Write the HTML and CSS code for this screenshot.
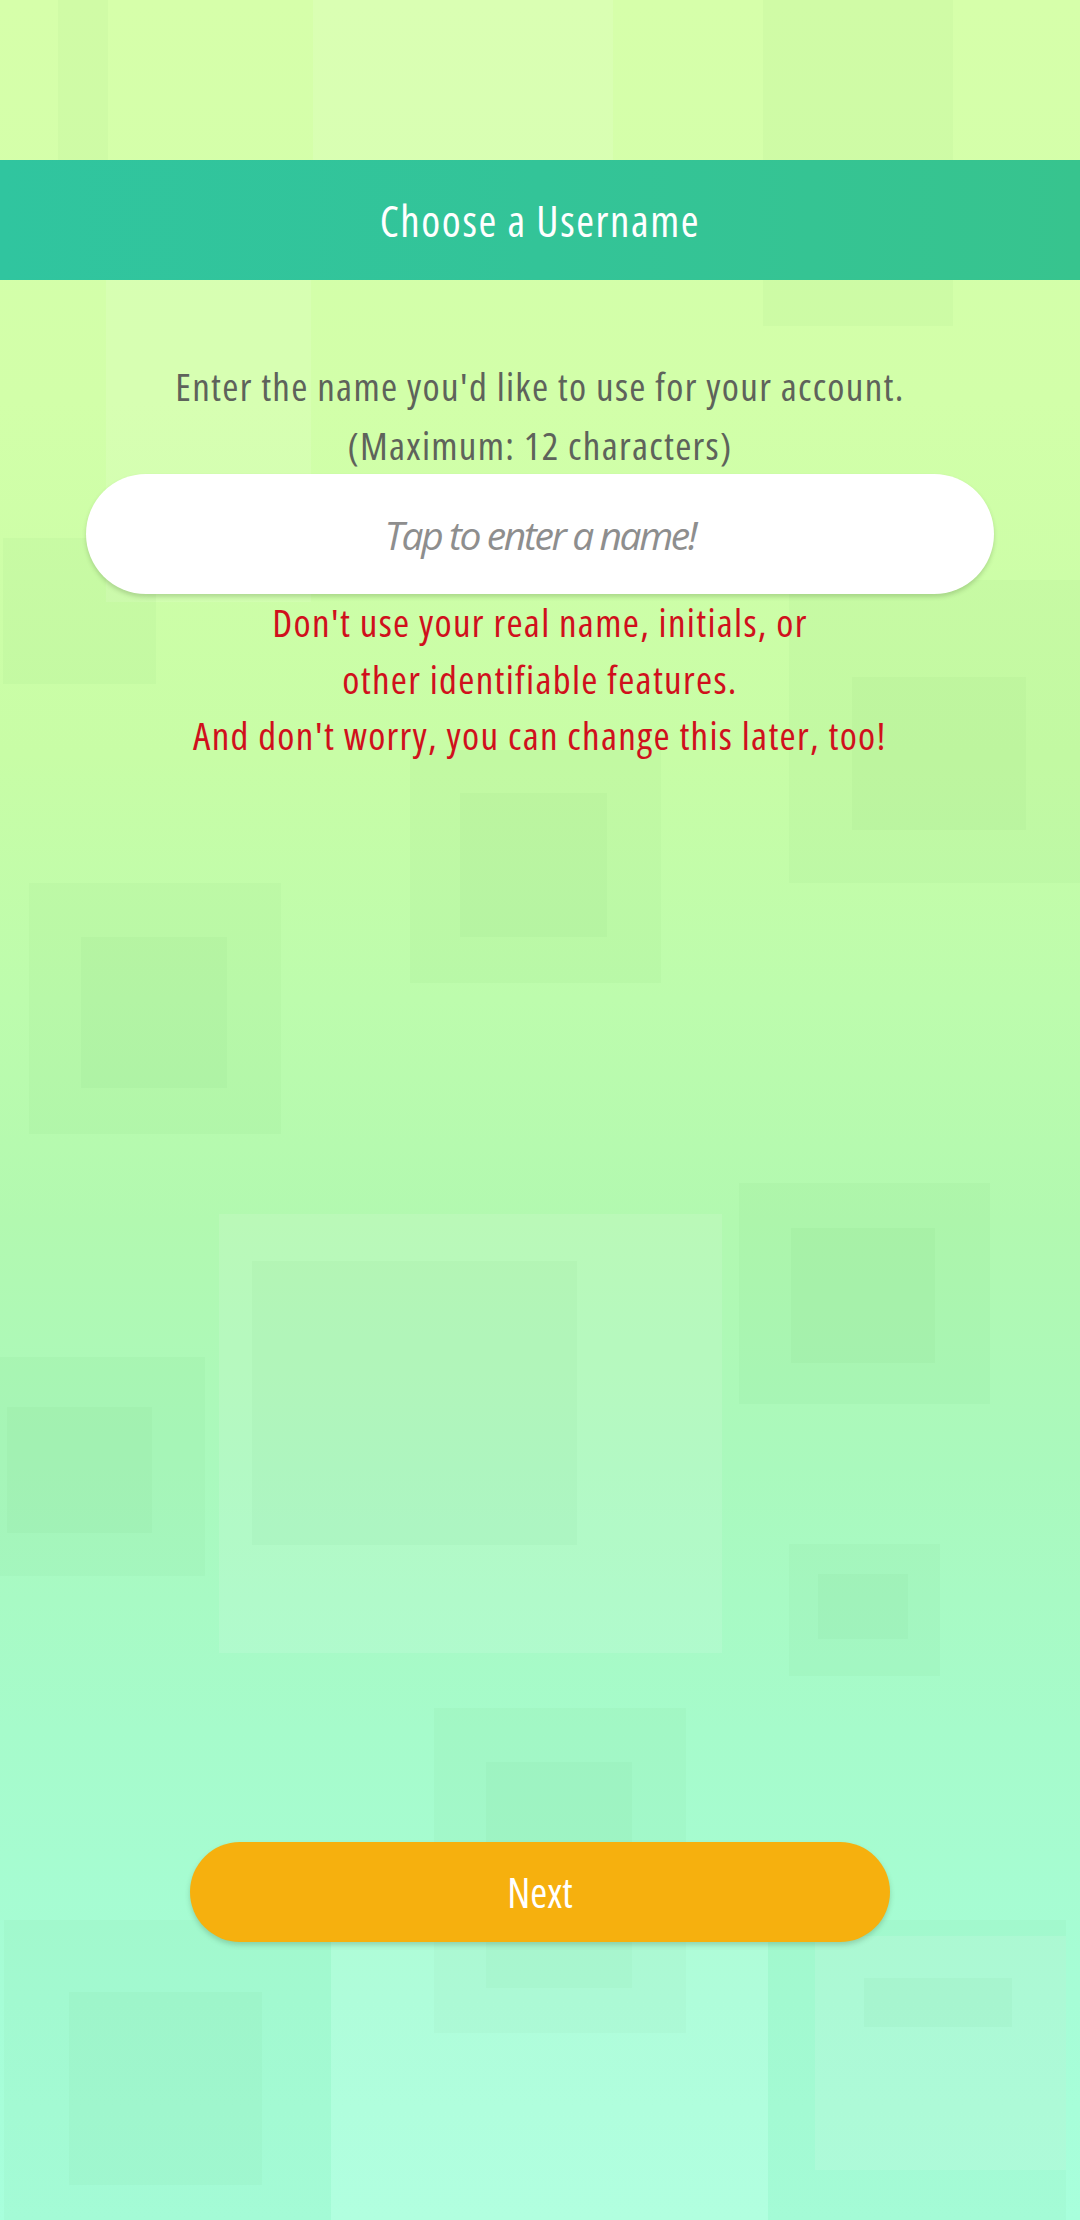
FILE: index.html
```
<!DOCTYPE html>
<html lang="en">
<head>
<meta charset="utf-8">
<title>Choose a Username</title>
<link rel="stylesheet" href="styles.css">
</head>
<body>
<div class="decor" aria-hidden="true">
  <div class="sq light r-top-a"></div>
  <div class="sq dark r-top-b"></div>
  <div class="sq dark r-top-c"></div>
  <div class="sq light r-left-a"></div>
  <div class="sq dark r-d"></div>
  <div class="sq dark r-e"></div>
  <div class="sq dark r-e2"></div>
  <div class="sq dark r-f"></div>
  <div class="sq dark r-f2"></div>
  <div class="sq dark r-g"></div>
  <div class="sq dark r-g2"></div>
  <div class="sq light r-h"></div>
  <div class="sq dark r-h2"></div>
  <div class="sq dark r-i"></div>
  <div class="sq dark r-i2"></div>
  <div class="sq dark r-j"></div>
  <div class="sq dark r-j2"></div>
  <div class="sq dark r-k"></div>
  <div class="sq dark r-k2"></div>
  <div class="sq dark r-l"></div>
  <div class="sq dark r-l2"></div>
  <div class="sq dark r-m"></div>
  <div class="sq dark r-m2"></div>
  <div class="sq light r-n"></div>
  <div class="sq dark r-o"></div>
  <div class="sq light r-o2"></div>
  <div class="sq dark r-o3"></div>
</div>
<div class="screen">
  <header class="titlebar">
    <h1 class="title">Choose a Username</h1>
  </header>
  <main class="content">
    <p class="intro">Enter the name you'd like to use for your account.<br>(Maximum: 12 characters)</p>
    <div class="name-field">
      <span class="placeholder">Tap to enter a name!</span>
    </div>
    <p class="warning">Don't use your real name, initials, or<br>other identifiable features.<br>And don't worry, you can change this later, too!</p>
  </main>
  <div class="actions">
    <button class="next-btn" type="button">Next</button>
  </div>
</div>
</body>
</html>
```
FILE: styles.css
```
* { box-sizing: border-box; }
html, body { margin: 0; padding: 0; }
body {
  width: 1080px;
  height: 2220px;
  overflow: hidden;
  position: relative;
  font-family: "Open Sans", "Noto Sans", sans-serif;
  font-stretch: 75%;
  background: linear-gradient(180deg,
    #d6ffaa 0%,
    #d2ffa9 18%,
    #c8fda6 34%,
    #bdfcad 45%,
    #b2f9b0 55%,
    #aaf9bd 66%,
    #a6fbcb 78%,
    #a6fdd6 90%,
    #a8ffdc 100%);
}
.decor { position: absolute; inset: 0; z-index: 0; }
.sq { position: absolute; }
.sq.dark { background: rgba(70, 150, 50, 0.035); }
.sq.light { background: rgba(255, 255, 255, 0.11); }

.r-top-a { left: 313px; top: 0; width: 300px; height: 170px; }
.r-top-b { left: 58px; top: 0; width: 50px; height: 170px; }
.r-top-c { left: 763px; top: 0; width: 190px; height: 326px; }
.r-left-a { left: 106px; top: 276px; width: 205px; height: 326px; }
.r-d { left: 3px; top: 538px; width: 153px; height: 146px; }
.r-e { left: 789px; top: 580px; width: 291px; height: 303px; }
.r-e2 { left: 852px; top: 677px; width: 174px; height: 153px; }
.r-f { left: 410px; top: 750px; width: 251px; height: 233px; }
.r-f2 { left: 460px; top: 793px; width: 147px; height: 144px; }
.r-g { left: 29px; top: 883px; width: 252px; height: 251px; }
.r-g2 { left: 81px; top: 937px; width: 146px; height: 151px; }
.r-h { left: 219px; top: 1214px; width: 503px; height: 439px; }
.r-h2 { left: 252px; top: 1261px; width: 325px; height: 284px; }
.r-i { left: 739px; top: 1183px; width: 251px; height: 221px; }
.r-i2 { left: 791px; top: 1228px; width: 144px; height: 135px; }
.r-j { left: 0; top: 1357px; width: 205px; height: 219px; }
.r-j2 { left: 7px; top: 1407px; width: 145px; height: 126px; }
.r-k { left: 789px; top: 1544px; width: 151px; height: 132px; }
.r-k2 { left: 818px; top: 1574px; width: 90px; height: 65px; }
.r-l { left: 434px; top: 1708px; width: 252px; height: 325px; }
.r-l2 { left: 486px; top: 1762px; width: 146px; height: 226px; }
.r-m { left: 4px; top: 1920px; width: 327px; height: 300px; }
.r-m2 { left: 69px; top: 1992px; width: 193px; height: 193px; }
.r-n { left: 331px; top: 1920px; width: 437px; height: 300px; }
.r-o { left: 768px; top: 1920px; width: 298px; height: 300px; }
.r-o2 { left: 815px; top: 1936px; width: 251px; height: 234px; }
.r-o3 { left: 864px; top: 1978px; width: 148px; height: 49px; }

.screen {
  position: relative;
  z-index: 1;
  height: 2220px;
  display: flex;
  flex-direction: column;
  padding-top: 160px;
  padding-bottom: 278px;
}
.titlebar {
  height: 120px;
  display: flex;
  align-items: center;
  justify-content: center;
  background: linear-gradient(90deg, #30c59f 0%, #33c498 50%, #37c48e 100%);
}
.title {
  margin: 0;
  color: #ffffff;
  font-size: 43px;
  font-weight: 400;
  line-height: 1;
  letter-spacing: 1.6px;
}
.content {
  display: flex;
  flex-direction: column;
  align-items: center;
  padding-top: 76px;
}
.intro {
  margin: 0;
  text-align: center;
  color: #5e635b;
  font-size: 39px;
  line-height: 59px;
  letter-spacing: 1.3px;
}
.name-field {
  align-self: stretch;
  margin: 0 86px;
  height: 120px;
  border-radius: 60px;
  background: #ffffff;
  box-shadow: 0 3px 4px rgba(60, 90, 40, 0.22);
  display: flex;
  align-items: center;
  justify-content: center;
}
.placeholder {
  color: #8e8e8e;
  font-style: italic;
  font-size: 39px;
  font-stretch: 100%;
  letter-spacing: -2.4px;
  line-height: 1;
}
.warning {
  margin: 0;
  text-align: center;
  color: #d0101c;
  font-size: 39px;
  line-height: 56.5px;
  letter-spacing: 1.3px;
}
.actions {
  margin-top: auto;
  display: flex;
  justify-content: center;
}
.next-btn {
  width: 700px;
  height: 100px;
  border: 0;
  border-radius: 50px;
  background: #f6b00e;
  color: #ffffff;
  font-family: "Open Sans", sans-serif;
  font-size: 41px;
  font-stretch: 75%;
  box-shadow: 0 3px 5px rgba(60, 100, 60, 0.25);
  padding: 0;
}
```
